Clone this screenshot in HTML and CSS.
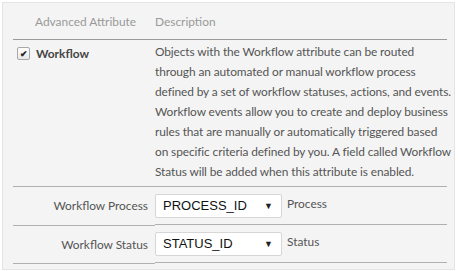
FILE: index.html
```html
<!DOCTYPE html>
<html>
<head>
    <title>Advanced Attributes</title>
    <link rel="stylesheet" href="styles.css">
</head>
<body>
    <div class="panel">
        <table class="attrs">
            <thead>
                <tr>
                    <th class="col-name">Advanced Attribute</th>
                    <th class="col-desc">Description</th>
                </tr>
            </thead>
            <tbody>
                <tr class="attr-row">
                    <td class="attr-name">
                        <label><span class="check">&#10004;</span> Workflow</label>
                    </td>
                    <td class="attr-desc">
                        Objects with the Workflow attribute can be routed<br>
                        through an automated or manual workflow process<br>
                        defined by a set of workflow statuses, actions, and events.<br>
                        Workflow events allow you to create and deploy business<br>
                        rules that are manually or automatically triggered based<br>
                        on specific criteria defined by you. A field called Workflow<br>
                        Status will be added when this attribute is enabled.
                    </td>
                </tr>
                <tr class="field-row">
                    <td class="field-label">Workflow Process</td>
                    <td class="field-value">
                        <span class="select">PROCESS_ID <i class="caret">&#9660;</i></span>
                        <span class="field-note">Process</span>
                    </td>
                </tr>
                <tr class="field-row">
                    <td class="field-label">Workflow Status</td>
                    <td class="field-value">
                        <span class="select">STATUS_ID <i class="caret">&#9660;</i></span>
                        <span class="field-note">Status</span>
                    </td>
                </tr>
            </tbody>
        </table>
    </div>
</body>
</html>
```

FILE: styles.css
```css
html, body {
    margin: 0;
    background: #fff;
}

.panel {
    margin: 2px 0 0 2px;
    width: 453px;
    height: 268px;
    border: 1px solid #e4e4e4;
    background: #f4f4f4;
    padding: 0 0 0 10px;
    box-sizing: border-box;
    font: 11.9px Lato, "Open Sans", sans-serif;
    color: #555;
}

.attrs {
    width: 434px;
    table-layout: fixed;
    border-collapse: collapse;
}

.attrs th {
    font-weight: normal;
    color: #999;
    text-align: left;
    height: 36px;
    padding: 0;
    vertical-align: middle;
    border-bottom: 1px solid #9a9a9a;
}

.attrs th.col-name {
    width: 142px;
    padding-left: 22px;
    box-sizing: border-box;
}

.attrs td {
    padding: 0;
    border-bottom: 1px solid #b0b0b0;
}

.attr-name {
    vertical-align: top;
    padding-top: 6px !important;
    padding-left: 4px !important;
    font-weight: bold;
    color: #444;
}

.attr-name label {
    display: flex;
    align-items: center;
    gap: 6px;
}

.check {
    display: inline-flex;
    align-items: center;
    justify-content: center;
    width: 11px;
    height: 11px;
    border: 1px solid #a8a8a8;
    border-radius: 2px;
    background: linear-gradient(#fff, #e8e8e8);
    font-size: 9px;
    line-height: 1;
    color: #222;
}

.attr-desc {
    line-height: 20px;
    white-space: nowrap;
    letter-spacing: -0.1px;
    padding: 2px 0 4px 0 !important;
}

.field-row td {
    height: 37px;
}

.field-label {
    text-align: right;
    padding-right: 7px !important;
}

.field-value {
    display: flex;
    align-items: center;
    gap: 5px;
    height: 37px;
}

.select {
    display: inline-flex;
    align-items: center;
    justify-content: space-between;
    width: 127px;
    height: 24px;
    box-sizing: border-box;
    padding: 0 8px 0 7px;
    background: #fff;
    border: 1px solid #d6d6d6;
    border-radius: 2px;
    font: 13px "Liberation Sans", Arial, sans-serif;
    color: #111;
}

.caret {
    font-style: normal;
    font-size: 9px;
    color: #222;
}

.field-note {
    margin-bottom: 4px;
}
```
